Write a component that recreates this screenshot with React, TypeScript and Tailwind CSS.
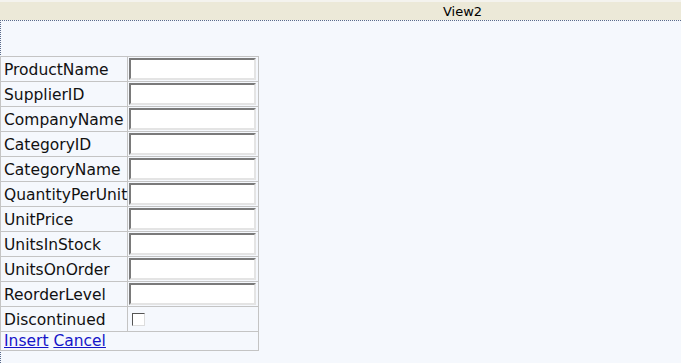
import React from "react";

const fields = [
  "ProductName",
  "SupplierID",
  "CompanyName",
  "CategoryID",
  "CategoryName",
  "QuantityPerUnit",
  "UnitPrice",
  "UnitsInStock",
  "UnitsOnOrder",
  "ReorderLevel",
];

export default function App() {
  return (
    <div className="w-[681px] h-[363px] bg-[#f5f8fd] overflow-hidden" style={{ fontFamily: '"DejaVu Sans", Verdana, sans-serif' }}>
      <div className="h-[20px] bg-[#ece9d8] border-t-2 border-[#f4f3ee] flex items-center pl-[443px] text-[13px] text-black leading-none">
        View2
      </div>
      <div className="h-[343px] border-t border-l border-dotted border-[#5a6a8a] pt-[35px]">
        <table className="border-collapse text-[15.5px] text-[#111] -ml-px table-fixed w-[258px]">
          <colgroup>
            <col className="w-[127px]" />
            <col className="w-[131px]" />
          </colgroup>
          <tbody>
            {fields.map((f) => (
              <tr key={f} className="h-[25px]">
                <td className="border border-[#c4c4c4] pl-[3px] pr-0 pt-[3px] pb-0 leading-none whitespace-nowrap overflow-visible">{f}</td>
                <td className="border border-[#c4c4c4] pl-[1px] pr-0 py-0">
                  <div className="w-[127px] h-[22px] border-2 border-t-[#7a7a7a] border-l-[#7a7a7a] border-b-[#e4e4e4] border-r-[#e4e4e4] bg-white" />
                </td>
              </tr>
            ))}
            <tr className="h-[25px]">
              <td className="border border-[#c4c4c4] pl-[3px] pt-[3px] pb-0 leading-none">Discontinued</td>
              <td className="border border-[#c4c4c4] pl-[4px] py-0">
                <div className="w-[13px] h-[13px] border border-[#555] border-b-[#ddd] border-r-[#ddd] bg-white mt-[1px]" />
              </td>
            </tr>
            <tr className="h-[18px]">
              <td colSpan={2} className="border border-[#c4c4c4] pl-[3px] pt-[2px] pb-0 leading-none">
                <a className="text-[#1414c8] underline cursor-pointer">Insert</a>{" "}
                <a className="text-[#1414c8] underline cursor-pointer">Cancel</a>
              </td>
            </tr>
          </tbody>
        </table>
      </div>
    </div>
  );
}
